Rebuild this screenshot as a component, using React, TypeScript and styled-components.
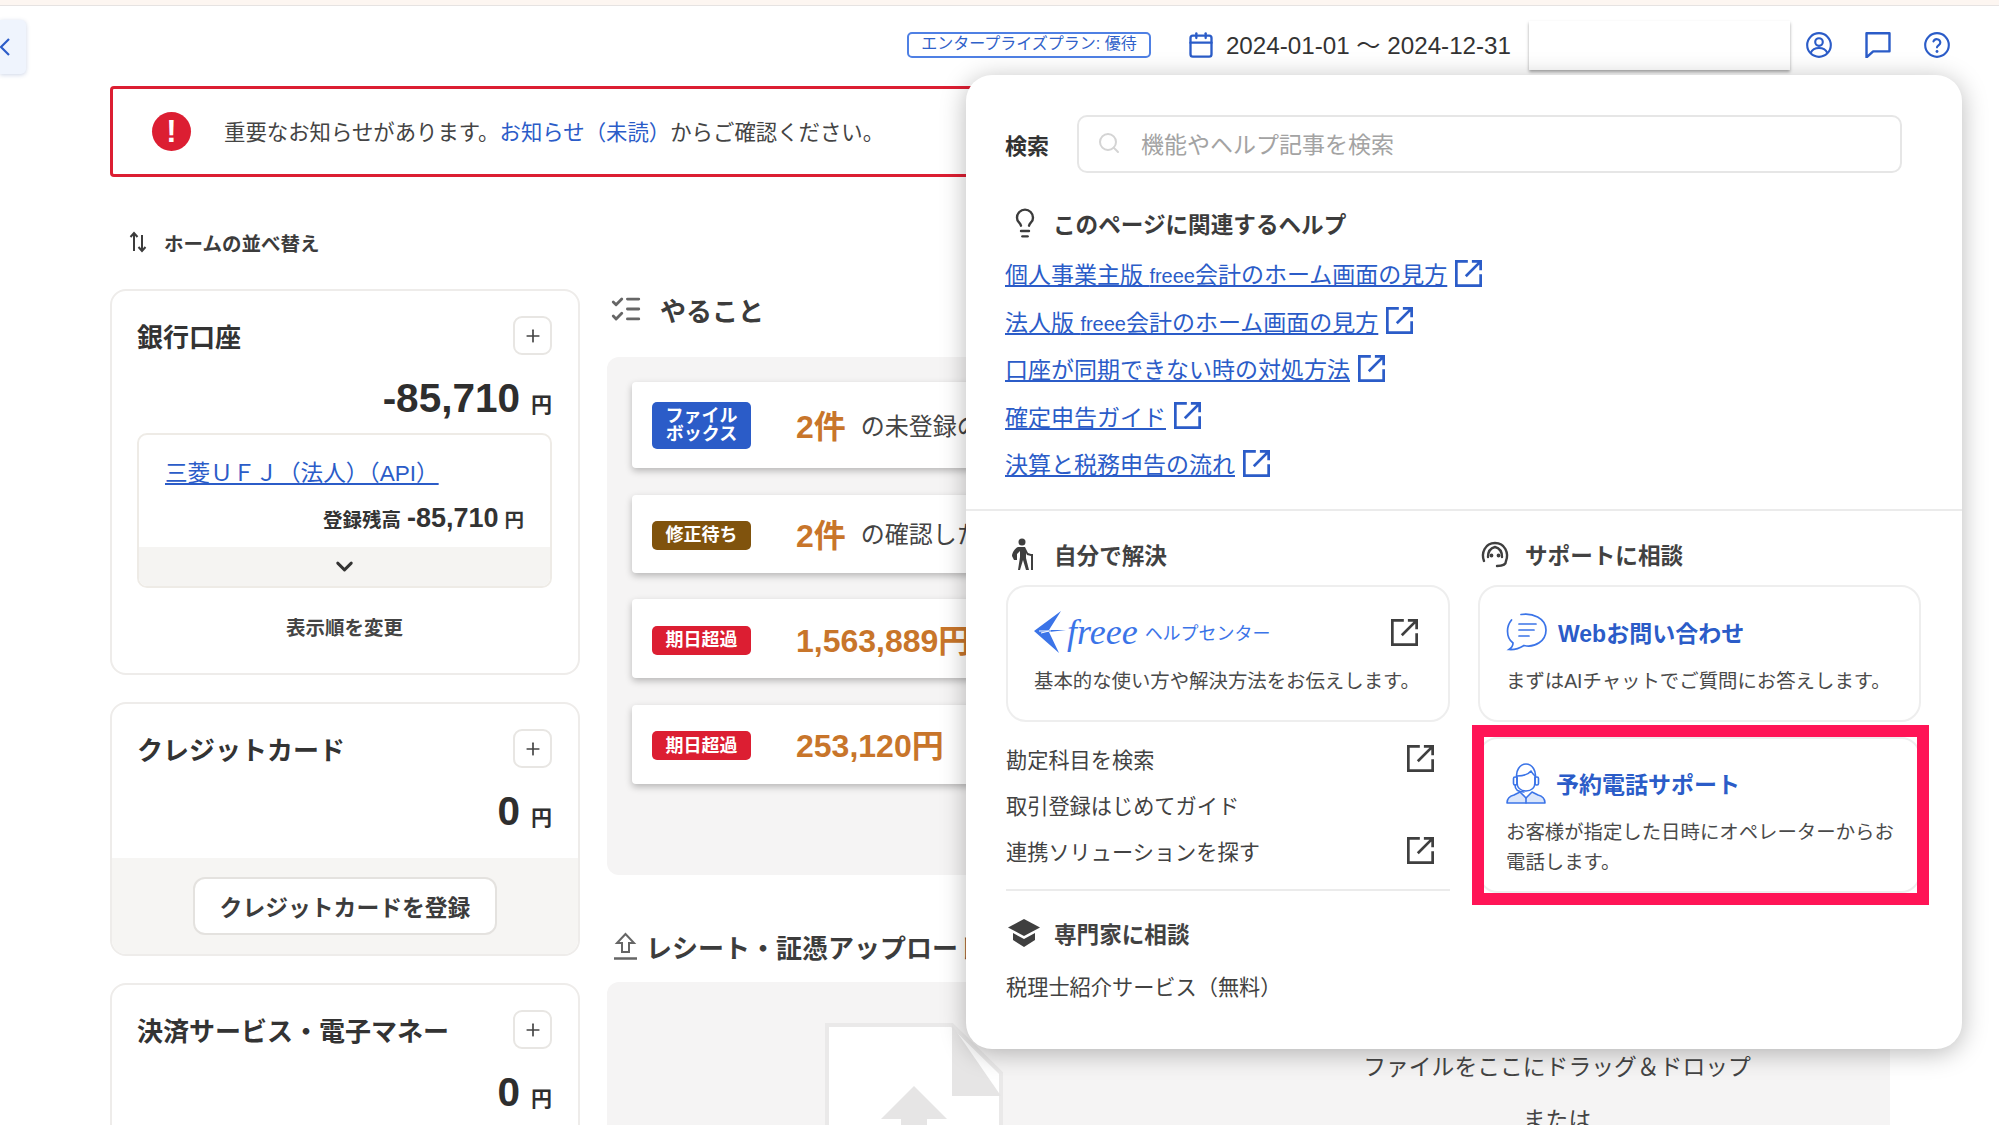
import React from "react";
import styled, { createGlobalStyle } from "styled-components";
import { ChevronDown, Lightbulb, ListChecks, Plus, Search, Calendar } from "lucide-react";

const Global = createGlobalStyle`
  html, body { margin: 0; padding: 0; background: #fff; }
  body {
    font-family: "Liberation Sans", "Noto Sans CJK JP", sans-serif;
    color: #333;
    overflow: hidden;
  }
  * { box-sizing: border-box; }
`;

const Page = styled.div`
  position: relative;
  width: 1999px;
  height: 1125px;
  overflow: hidden;
  background: #fff;
`;
const TopStrip = styled.div`
  height: 6px;
  background: #fdf6f1;
  border-bottom: 1px solid #e6e3e2;
`;
const Header = styled.header`
  height: 78px;
  display: flex;
  align-items: center;
  padding-right: 49px;
`;
const BackTab = styled.button`
  width: 26px;
  height: 54px;
  margin-top: 4px;
  margin-right: auto;
  padding: 0;
  border: 0;
  border-radius: 0 5px 5px 0;
  background: #eff4fd;
  box-shadow: 0 1px 4px rgba(60, 90, 160, 0.25);
  color: #2b5cc8;
  display: flex;
  align-items: center;
  justify-content: flex-start;
  overflow: hidden;
  svg { margin-left: -6px; }
`;
const PlanBadge = styled.div`
  width: 244px;
  height: 26px;
  border: 2px solid #4f80e4;
  border-radius: 5px;
  color: #2f61c9;
  font-size: 16px;
  line-height: 20px;
  text-align: center;
`;
const DateRange = styled.div`
  display: flex;
  align-items: center;
  margin-left: 36px;
  gap: 11px;
  font-size: 24.2px;
  color: #333;
  svg { color: #2b5cc8; }
`;
const DateText = styled.span`
  padding-bottom: 3px;
`;
const BlankField = styled.div`
  width: 261px;
  height: 49px;
  margin-left: 18px;
  background: #fff;
  box-shadow: 0 2px 3px rgba(0, 0, 0, 0.35);
`;
const HeaderIcons = styled.div`
  display: flex;
  gap: 33px;
  margin-left: 16px;
  color: #2b5cc8;
  svg { display: block; }
`;
const Main = styled.main`
  padding: 2px 109px 0 110px;
`;
const Notice = styled.div`
  height: 91px;
  border: 3px solid #dc1e32;
  border-radius: 4px;
  display: flex;
  align-items: center;
  padding-left: 39px;
  gap: 33px;
  font-size: 21.4px;
  color: #444;
`;
const NoticeText = styled.span`
  padding-bottom: 3px;
`;
const NoticeMark = styled.span`
  width: 39px;
  height: 39px;
  border-radius: 50%;
  background: #dc1e32;
  display: flex;
  align-items: center;
  justify-content: center;
  color: #fff;
  font-size: 31px;
  font-weight: 700;
`;
const InlineLink = styled.a`
  color: #2b5cc8;
`;
const SortRow = styled.div`
  display: flex;
  align-items: center;
  height: 30px;
  margin: 50px 0 32px 19px;
  gap: 17px;
  font-size: 19.5px;
  font-weight: 700;
  color: #3c3c3c;
`;
const Columns = styled.div`
  display: grid;
  grid-template-columns: 470px 1283px;
  column-gap: 27px;
`;
const LeftColumn = styled.div`
  display: flex;
  flex-direction: column;
  gap: 27px;
`;
const Card = styled.section<{ $h: number }>`
  height: ${(p) => p.$h}px;
  border: 2px solid #eeecea;
  border-radius: 16px;
  overflow: hidden;
  display: flex;
  flex-direction: column;
`;
const CardBody = styled.div`
  padding: 25px 26px 0 25px;
`;
const CardHead = styled.div`
  display: flex;
  align-items: center;
  justify-content: space-between;
  font-size: 26px;
  font-weight: 700;
  color: #333;
`;
const PlusButton = styled.span`
  width: 39px;
  height: 39px;
  border: 2px solid #e8e6e3;
  border-radius: 9px;
  display: flex;
  align-items: center;
  justify-content: center;
  color: #444;
`;
const Amount = styled.div`
  display: flex;
  justify-content: flex-end;
  align-items: baseline;
  gap: 11px;
  margin-top: 20px;
  font-size: 40.5px;
  line-height: 46px;
  font-weight: 700;
  color: #2e2e2e;
`;
const Yen = styled.span`
  font-size: 21px;
`;
const AccountBox = styled.div`
  margin-top: 5px;
  height: 155px;
  border: 2px solid #eeebe6;
  border-radius: 10px;
  overflow: hidden;
  display: flex;
  flex-direction: column;
`;
const AccountLink = styled.a`
  display: block;
  margin: 24px 0 0 26px;
  font-size: 22.6px;
  line-height: 30px;
  color: #2b5cc8;
  text-decoration: underline;
`;
const AccountRest = styled.div`
  display: flex;
  justify-content: flex-end;
  align-items: baseline;
  gap: 6px;
  margin: 13px 26px 0 0;
  font-size: 27px;
  line-height: 32px;
  font-weight: 700;
  color: #333;
`;
const SmallBold = styled.span`
  font-size: 19.5px;
`;
const ExpandBar = styled.div`
  margin-top: auto;
  height: 39px;
  background: #f5f4f2;
  display: flex;
  align-items: center;
  justify-content: center;
  color: #333;
`;
const ReorderLink = styled.div`
  margin-top: 26px;
  text-align: center;
  font-size: 19.5px;
  line-height: 28px;
  font-weight: 700;
  color: #444;
`;
const CardFooter = styled.div`
  margin-top: auto;
  height: 96px;
  background: #f6f5f3;
  display: flex;
  align-items: center;
  justify-content: center;
`;
const RegisterButton = styled.button`
  width: 304px;
  height: 58px;
  border: 2px solid #e4e2df;
  border-radius: 12px;
  background: #fff;
  font: inherit;
  font-size: 22.8px;
  font-weight: 700;
  color: #3c3c3c;
`;
const CenterColumn = styled.div`
  min-width: 0;
`;
const SectionTitle = styled.h2`
  display: flex;
  align-items: center;
  height: 40px;
  margin: 0;
  padding-left: 2px;
  font-size: 26px;
  font-weight: 700;
  color: #3c3c3c;
  white-space: nowrap;
`;
const TodoTitle = styled(SectionTitle)`
  gap: 17px;
  margin-bottom: 28px;
`;
const UploadTitle = styled(SectionTitle)`
  gap: 9px;
  padding-left: 7px;
  margin: 51px 0 16px;
`;
const Panel = styled.div`
  background: #f5f4f4;
  border-radius: 12px;
`;
const TodoPanel = styled(Panel)`
  height: 518px;
  padding: 25px 25px 0;
  display: flex;
  flex-direction: column;
  gap: 26.5px;
`;
const TodoRow = styled.div<{ $h: number }>`
  height: ${(p) => p.$h}px;
  background: #fff;
  border-radius: 4px;
  box-shadow: 0 3px 7px rgba(0, 0, 0, 0.25);
  display: flex;
  align-items: center;
  padding-left: 20px;
`;
const Badge = styled.span<{ $bg: string; $tall?: boolean }>`
  flex: none;
  width: 99px;
  height: ${(p) => (p.$tall ? 47 : 29)}px;
  margin-top: ${(p) => (p.$tall ? 0 : 3)}px;
  border-radius: 5px;
  background: ${(p) => p.$bg};
  color: #fff;
  font-size: 18px;
  line-height: 18px;
  font-weight: 700;
  text-align: center;
  display: flex;
  align-items: center;
  justify-content: center;
`;
const TodoValue = styled.span`
  margin-left: 45px;
  padding-bottom: 2px;
  font-size: 32px;
  font-weight: 700;
  color: #c8752a;
`;
const TodoText = styled.span`
  margin-left: 15px;
  padding-bottom: 2px;
  font-size: 24px;
  color: #444;
  white-space: nowrap;
`;
const UploadPanel = styled(Panel)`
  height: 300px;
  padding: 41px 0 0 218px;
  display: flex;
  gap: 254px;
`;
const DropText = styled.div`
  width: 600px;
  padding-top: 28px;
  text-align: center;
  font-size: 22.8px;
  line-height: 32px;
  color: #444;
`;
const DropOr = styled.div`
  margin-top: 21px;
`;

const Popover = styled.aside`
  position: absolute;
  left: 966px;
  top: 75px;
  width: 996px;
  height: 974px;
  background: #fff;
  border-radius: 26px;
  box-shadow: 0 4px 26px rgba(0, 0, 0, 0.28);
  padding-top: 40px;
  display: flex;
  flex-direction: column;
`;
const SearchRow = styled.div`
  display: flex;
  align-items: center;
  padding-left: 39px;
  gap: 28px;
  font-size: 22px;
  font-weight: 700;
  color: #333;
`;
const SearchBox = styled.div`
  width: 825px;
  height: 58px;
  border: 2px solid #e6e6e6;
  border-radius: 10px;
  display: flex;
  align-items: center;
  padding: 0 0 2px 18px;
  gap: 20px;
  font-size: 23px;
  font-weight: 400;
  color: #a3a3a3;
  svg { color: #d4d4d4; }
`;
const HelpBlock = styled.div`
  padding: 0 39px;
  height: 338px;
  border-bottom: 2px solid #ebebeb;
`;
const HelpTitle = styled.h3`
  display: flex;
  align-items: center;
  height: 32px;
  margin: 34px 0 10.5px 4px;
  gap: 12px;
  font-size: 22.6px;
  font-weight: 700;
  color: #3c3c3c;
`;
const HelpLink = styled.a`
  display: flex;
  align-items: center;
  height: 47.5px;
  gap: 8px;
  font-size: 23px;
  color: #2b5cc8;
`;
const HelpLinkText = styled.span`
  text-decoration: underline;
`;
const NarrowWord = styled.span`
  font-size: 20px;
`;
const Lower = styled.div`
  display: grid;
  grid-template-columns: 444px 443px;
  column-gap: 28px;
  padding: 27px 0 0 40px;
`;
const GroupHead = styled.h3`
  display: flex;
  align-items: center;
  height: 32px;
  margin: 0 0 15px;
  gap: 20px;
  font-size: 22.6px;
  font-weight: 700;
  color: #424242;
  svg { flex: none; }
`;
const SelfHead = styled(GroupHead)`
  padding-left: 6px;
`;
const SupportHead = styled(GroupHead)`
  padding-left: 2px;
  gap: 15px;
`;
const ExpertHead = styled(GroupHead)`
  margin: 26px 0 24px;
  gap: 14px;
  padding-left: 2px;
`;
const ActionCard = styled.div<{ $h?: number }>`
  position: relative;
  height: ${(p) => p.$h ?? 137}px;
  border: 2px solid #eeeeee;
  border-radius: 20px;
  padding: 25px 20px 0 26px;
  background: #fff;
`;
const PhoneCard = styled(ActionCard)`
  margin-top: 15px;
  padding-top: 24px;
`;
const Highlight = styled.span`
  position: absolute;
  left: -8px;
  right: -10px;
  top: -14px;
  bottom: -14px;
  border: 12px solid #ff1456;
  pointer-events: none;
`;
const CardTitleRow = styled.div`
  display: flex;
  align-items: center;
  height: 40px;
  gap: 10px;
  font-size: 23px;
  font-weight: 700;
  color: #2b5cc8;
  white-space: nowrap;
`;
const Logo = styled.div`
  display: flex;
  align-items: center;
  height: 40px;
  color: #3b74e8;
`;
const LogoWord = styled.span`
  font-family: "Liberation Serif", serif;
  font-style: italic;
  font-size: 36px;
  line-height: 40px;
  margin-left: 1px;
`;
const LogoSub = styled.span`
  font-size: 18px;
  margin-left: 7px;
`;
const CornerIcon = styled.span`
  position: absolute;
  right: 30px;
  top: 32px;
  line-height: 0;
  color: #3f3f3f;
`;
const CardText = styled.p`
  margin: 14px 0 0;
  font-size: 19.4px;
  line-height: 30px;
  color: #4a4a4a;
`;
const ListArea = styled.div`
  margin-top: 13px;
  padding-bottom: 16px;
  border-bottom: 2px solid #ebebeb;
`;
const ListRow = styled.div`
  height: 46px;
  display: flex;
  align-items: center;
  justify-content: space-between;
  padding-right: 16px;
  font-size: 21.2px;
  color: #424242;
  svg { color: #3f3f3f; }
`;
const PlainText = styled.div`
  font-size: 21.2px;
  line-height: 30px;
  color: #424242;
`;

const ExternalIcon = ({ size = 27 }: { size?: number }) => (
  <svg width={size} height={size} viewBox="2 2 20 20" fill="none" stroke="currentColor" strokeWidth="2">
    <path d="M11.500 3H3v18h18v-8.500" />
    <path d="M10 14 21 3M14.500 3H21v6.500" />
  </svg>
);
const SortIcon = () => (
  <svg width="18" height="22" viewBox="0 0 18 22" fill="none" stroke="#3c3c3c" strokeWidth="2">
    <path d="M5 20V2M1.500 6 5 2l3.500 4" />
    <path d="M13 4v16M9.500 16l3.500 4 3.500-4" />
  </svg>
);
const UploadIcon = () => (
  <svg width="23" height="28" viewBox="0 0 23 28" fill="none" stroke="#666" strokeWidth="2">
    <path d="M11.500 2 3 11h5v9h7v-9h5z" />
    <path d="M0 26.500h23" strokeWidth="2.500" />
  </svg>
);
const FileIcon = () => (
  <svg width="178" height="240" viewBox="0 0 178 240">
    <path d="M2 2h125l49 48v188H2z" fill="#fff" stroke="#eae9e9" strokeWidth="4" />
    <path d="M127 2v71h49z" fill="#e6e5e5" />
    <path d="M89 63l33 33H102v60H76V96H56z" fill="#e6e5e5" />
  </svg>
);
const UserIcon = () => (
  <svg width="26" height="26" viewBox="1 1 22 22" fill="none" stroke="currentColor" strokeWidth="1.800">
    <circle cx="12" cy="12" r="10" />
    <circle cx="12" cy="9.500" r="3.200" />
    <path d="M5 18.500c1.500-3 4-4 7-4s5.500 1 7 4" />
  </svg>
);
const BubbleIcon = () => (
  <svg width="26" height="26" viewBox="1.500 1.500 21 21.500" fill="none" stroke="currentColor" strokeWidth="2" strokeLinejoin="round">
    <path d="M2.500 2.500h19v15H8l-5.500 5z" />
  </svg>
);
const HelpIcon = () => (
  <svg width="26" height="26" viewBox="1 1 22 22" fill="none" stroke="currentColor" strokeWidth="1.800" strokeLinecap="round">
    <circle cx="12" cy="12" r="10" />
    <path d="M9 9a3 3 0 0 1 5.800 1c0 2-2.800 2.500-2.800 4" />
    <path d="M12 17.500h.01" strokeWidth="2.400" />
  </svg>
);
const Walker = () => (
  <svg width="22" height="32" viewBox="0 0 22 32" fill="#3f3f3f">
    <circle cx="10" cy="4" r="3.500" />
    <path d="M6 9h7l3 6 3 1v2l-4-1-1-2v5l3 12h-3l-3-10-3 10H6l2-13v-6l-3 3v6H2l-2-4c0-3 3-8 6-9z" />
    <path d="M19 16h2v16h-2z" />
  </svg>
);
const SupportHeadIcon = () => (
  <svg width="30" height="27" viewBox="0 0 30 27" fill="none" stroke="#3f3f3f" strokeWidth="2.400" strokeLinecap="round">
    <path d="M4 20C1 12 5 2 15 2s14 10 11 18c0 4-4 5-9 5" />
    <path d="M8 16C8 10 11 7 15 6c4 1 7 4 7 10" />
    <circle cx="11.500" cy="14.500" r=".7" fill="#3f3f3f" />
    <circle cx="18.500" cy="14.500" r=".7" fill="#3f3f3f" />
  </svg>
);
const CapIcon = () => (
  <svg width="32" height="28" viewBox="0 0 32 28" fill="#3f3f3f">
    <path d="M16 0 32 8.500 16 17 0 8.500z" />
    <path d="M5 14l11 6 11-6v7l-11 7-11-7z" />
  </svg>
);
const BirdLogo = () => (
  <svg width="32" height="42" viewBox="0 0 32 42" fill="currentColor">
    <path d="M0 20 27 0 15 19h17l-17 2 10 21z" />
    <path d="M5 20h12M7 22l8-2" stroke="#fff" strokeWidth="1" />
  </svg>
);
const ChatBubble = () => (
  <svg width="42" height="38" viewBox="0 0 42 38" fill="none" stroke="#3b74e8" strokeWidth="1.700" strokeLinecap="round">
    <path d="M15 1.500C26 -.5 40 5 40 17c0 11-11 18-22 15.500C14 35 9 37 3 36.500c3-2 4-4 4-6.500C3 27 1.500 22 1.500 18c0-4 1.500-8 4-11" />
    <path d="M13 11h17M13 17h15M13 23h10" />
  </svg>
);
const AgentIcon = () => (
  <svg width="40" height="42" viewBox="0 0 40 42" fill="none" stroke="#3b74e8" strokeWidth="1.600" strokeLinecap="round" strokeLinejoin="round">
    <path d="M11 17c-2-8 3-15 9-15s11 7 9 15" />
    <path d="M11 14c4 0 11-1 14-5 1 2 3 4 4 5" />
    <path d="M11 15v5c0 6 4 9 9 9s9-3 9-9v-5" />
    <rect x="7.500" y="15" width="3.500" height="8" rx="1.500" />
    <rect x="29" y="15" width="3.500" height="8" rx="1.500" />
    <path d="M9 23c0 5 4 7 9 7" />
    <path d="M1 41c0-5 3-7 7-8l6-3 6 6 6-6 6 3c4 1 7 3 7 8z" fill="#dbe6fb" />
    <path d="M20 36v5" />
  </svg>
);

const links: [string, string?][] = [
  ["個人事業主版 ", "会計のホーム画面の見方"],
  ["法人版 ", "会計のホーム画面の見方"],
  ["口座が同期できない時の対処方法"],
  ["確定申告ガイド"],
  ["決算と税務申告の流れ"],
];

export default function App() {
  return (
    <Page>
      <Global />
      <TopStrip />
      <Header>
        <BackTab aria-label="戻る">
          <svg width="20" height="24" viewBox="0 0 20 24" fill="none" stroke="currentColor" strokeWidth="2.200">
            <path d="M2 3v18M15 4l-8 8 8 8" />
          </svg>
        </BackTab>
        <PlanBadge>エンタープライズプラン: 優待</PlanBadge>
        <DateRange>
          <Calendar size={28} strokeWidth={2} />
          <DateText>2024-01-01 〜 2024-12-31</DateText>
        </DateRange>
        <BlankField />
        <HeaderIcons>
          <UserIcon />
          <BubbleIcon />
          <HelpIcon />
        </HeaderIcons>
      </Header>
      <Main>
        <Notice>
          <NoticeMark>!</NoticeMark>
          <NoticeText>
            重要なお知らせがあります。<InlineLink>お知らせ（未読）</InlineLink>からご確認ください。
          </NoticeText>
        </Notice>
        <SortRow>
          <SortIcon />
          ホームの並べ替え
        </SortRow>
        <Columns>
          <LeftColumn>
            <Card $h={386}>
              <CardBody>
                <CardHead>
                  銀行口座
                  <PlusButton><Plus size={20} /></PlusButton>
                </CardHead>
                <Amount>-85,710 <Yen>円</Yen></Amount>
                <AccountBox>
                  <AccountLink>三菱ＵＦＪ（法人）（API）</AccountLink>
                  <AccountRest>
                    <SmallBold>登録残高</SmallBold>-85,710 <SmallBold>円</SmallBold>
                  </AccountRest>
                  <ExpandBar><ChevronDown size={27} strokeWidth={2.6} /></ExpandBar>
                </AccountBox>
                <ReorderLink>表示順を変更</ReorderLink>
              </CardBody>
            </Card>
            <Card $h={254}>
              <CardBody>
                <CardHead>
                  クレジットカード
                  <PlusButton><Plus size={20} /></PlusButton>
                </CardHead>
                <Amount>0 <Yen>円</Yen></Amount>
              </CardBody>
              <CardFooter>
                <RegisterButton>クレジットカードを登録</RegisterButton>
              </CardFooter>
            </Card>
            <Card $h={252}>
              <CardBody>
                <CardHead>
                  決済サービス・電子マネー
                  <PlusButton><Plus size={20} /></PlusButton>
                </CardHead>
                <Amount>0 <Yen>円</Yen></Amount>
              </CardBody>
            </Card>
          </LeftColumn>
          <CenterColumn>
            <TodoTitle>
              <ListChecks size={34} strokeWidth={2} color="#666" />
              やること
            </TodoTitle>
            <TodoPanel>
              <TodoRow $h={86}>
                <Badge $bg="#2b5cc8" $tall>ファイル<br />ボックス</Badge>
                <TodoValue>2件</TodoValue>
                <TodoText>の未登録のファイルがあります</TodoText>
              </TodoRow>
              <TodoRow $h={78}>
                <Badge $bg="#80530d">修正待ち</Badge>
                <TodoValue>2件</TodoValue>
                <TodoText>の確認した取引があります</TodoText>
              </TodoRow>
              <TodoRow $h={79}>
                <Badge $bg="#dc1e32">期日超過</Badge>
                <TodoValue>1,563,889円</TodoValue>
              </TodoRow>
              <TodoRow $h={79}>
                <Badge $bg="#dc1e32">期日超過</Badge>
                <TodoValue>253,120円</TodoValue>
              </TodoRow>
            </TodoPanel>
            <UploadTitle>
              <UploadIcon />
              レシート・証憑アップロード
            </UploadTitle>
            <UploadPanel>
              <FileIcon />
              <DropText>
                ファイルをここにドラッグ＆ドロップ
                <DropOr>または</DropOr>
              </DropText>
            </UploadPanel>
          </CenterColumn>
        </Columns>
      </Main>
      <Popover>
        <SearchRow>
          検索
          <SearchBox>
            <Search size={24} />
            機能やヘルプ記事を検索
          </SearchBox>
        </SearchRow>
        <HelpBlock>
          <HelpTitle>
            <Lightbulb size={32} strokeWidth={1.8} />
            このページに関連するヘルプ
          </HelpTitle>
          {links.map(([before, after]) => (
            <HelpLink key={before}>
              <HelpLinkText>
                {before}
                {after && <NarrowWord>freee</NarrowWord>}
                {after}
              </HelpLinkText>
              <ExternalIcon />
            </HelpLink>
          ))}
        </HelpBlock>
        <Lower>
          <div>
            <SelfHead><Walker />自分で解決</SelfHead>
            <ActionCard>
              <Logo>
                <BirdLogo />
                <LogoWord>freee</LogoWord>
                <LogoSub>ヘルプセンター</LogoSub>
              </Logo>
              <CornerIcon><ExternalIcon /></CornerIcon>
              <CardText>基本的な使い方や解決方法をお伝えします。</CardText>
            </ActionCard>
            <ListArea>
              <ListRow>勘定科目を検索<ExternalIcon /></ListRow>
              <ListRow>取引登録はじめてガイド</ListRow>
              <ListRow>連携ソリューションを探す<ExternalIcon /></ListRow>
            </ListArea>
            <ExpertHead><CapIcon />専門家に相談</ExpertHead>
            <PlainText>税理士紹介サービス（無料）</PlainText>
          </div>
          <div>
            <SupportHead><SupportHeadIcon />サポートに相談</SupportHead>
            <ActionCard>
              <CardTitleRow><ChatBubble />Webお問い合わせ</CardTitleRow>
              <CardText>まずはAIチャットでご質問にお答えします。</CardText>
            </ActionCard>
            <PhoneCard $h={156}>
              <CardTitleRow><AgentIcon />予約電話サポート</CardTitleRow>
              <CardText>
                お客様が指定した日時にオペレーターからお<br />電話します。
              </CardText>
              <Highlight />
            </PhoneCard>
          </div>
        </Lower>
      </Popover>
    </Page>
  );
}
